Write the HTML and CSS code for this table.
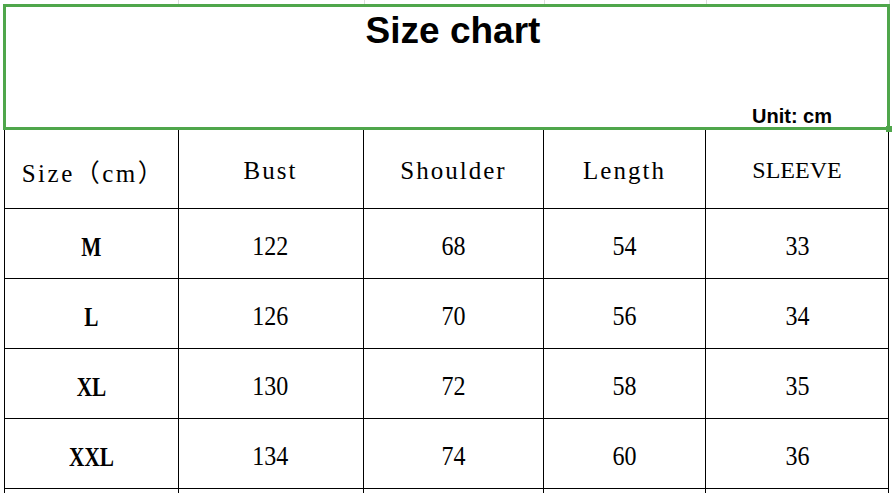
FILE: index.html
```html
<!DOCTYPE html>
<html>
<head>
<meta charset="utf-8">
<link rel="stylesheet" href="styles.css">
</head>
<body>
<div class="sheet">
  <div class="gridstrip">
    <span class="gl"></span><span class="gl"></span><span class="gl"></span><span class="gl"></span><span class="gl last"></span>
  </div>
  <div class="banner">
    <div class="title">Size chart</div>
    <div class="unit">Unit: cm</div>
    <span class="handle"></span>
  </div>
  <div class="table">
    <div class="cell head first">Size（cm）</div>
    <div class="cell head">Bust</div>
    <div class="cell head">Shoulder</div>
    <div class="cell head">Length</div>
    <div class="cell head plain">SLEEVE</div>

    <div class="cell first size"><span>M</span></div>
    <div class="cell num"><span>122</span></div>
    <div class="cell num"><span>68</span></div>
    <div class="cell num"><span>54</span></div>
    <div class="cell num"><span>33</span></div>

    <div class="cell first size"><span>L</span></div>
    <div class="cell num"><span>126</span></div>
    <div class="cell num"><span>70</span></div>
    <div class="cell num"><span>56</span></div>
    <div class="cell num"><span>34</span></div>

    <div class="cell first size"><span>XL</span></div>
    <div class="cell num"><span>130</span></div>
    <div class="cell num"><span>72</span></div>
    <div class="cell num"><span>58</span></div>
    <div class="cell num"><span>35</span></div>

    <div class="cell first size"><span>XXL</span></div>
    <div class="cell num"><span>134</span></div>
    <div class="cell num"><span>74</span></div>
    <div class="cell num"><span>60</span></div>
    <div class="cell num"><span>36</span></div>

    <div class="cell first"></div>
    <div class="cell"></div>
    <div class="cell"></div>
    <div class="cell"></div>
    <div class="cell"></div>
  </div>
</div>
</body>
</html>
```
FILE: styles.css
```css
html, body {
  margin: 0;
  padding: 0;
  background: #ffffff;
  overflow: hidden;
}
.sheet {
  width: 893px;
  height: 493px;
  overflow: hidden;
}
.gridstrip {
  display: grid;
  grid-template-columns: 174px 186px 180px 162px 183px;
  height: 4px;
  margin-left: 5px;
}
.gl {
  border-right: 1px solid #dcdcdc;
}
.banner {
  position: relative;
  box-sizing: border-box;
  margin-left: 3px;
  width: 887px;
  height: 126px;
  border: 3px solid #4fa64b;
  display: flex;
  flex-direction: column;
}
.title {
  font-family: "Liberation Sans", Arial, sans-serif;
  font-weight: bold;
  font-size: 37px;
  line-height: 40px;
  color: #000;
  text-align: center;
  padding-top: 4px;
  padding-left: 13px;
}
.unit {
  margin-top: auto;
  font-family: "Liberation Sans", Arial, sans-serif;
  font-weight: bold;
  font-size: 20px;
  line-height: 22px;
  color: #000;
  text-align: right;
  padding-right: 55px;
}
.handle {
  position: absolute;
  right: -5px;
  bottom: -5px;
  width: 6px;
  height: 6px;
  background: #4fa64b;
}
.table {
  display: grid;
  grid-template-columns: 174px 186px 180px 162px 183px;
  grid-template-rows: 79px repeat(5, 70px);
  margin-left: 4px;
}
.cell {
  box-sizing: border-box;
  border-right: 1px solid #000;
  border-bottom: 1px solid #000;
  display: flex;
  align-items: center;
  justify-content: center;
  font-family: "Liberation Serif", "Times New Roman", "Noto Sans CJK SC", serif;
  color: #000;
}
.cell.first {
  border-left: 1px solid #000;
  width: 175px;
}
.head {
  font-size: 25px;
  letter-spacing: 2px;
  padding-top: 3px;
}
.head.first {
  letter-spacing: 2.5px;
  padding-left: 4px;
}
.head.plain {
  font-size: 24px;
  letter-spacing: 0;
}
.num {
  padding-top: 6px;
}
.num span {
  display: inline-block;
  font-size: 27px;
  transform: scaleX(0.89);
}
.size {
  padding-top: 6px;
}
.size span {
  display: inline-block;
  font-family: "Liberation Serif", "Times New Roman", serif;
  font-weight: bold;
  font-size: 28px;
  transform: scaleX(0.76);
}
```
